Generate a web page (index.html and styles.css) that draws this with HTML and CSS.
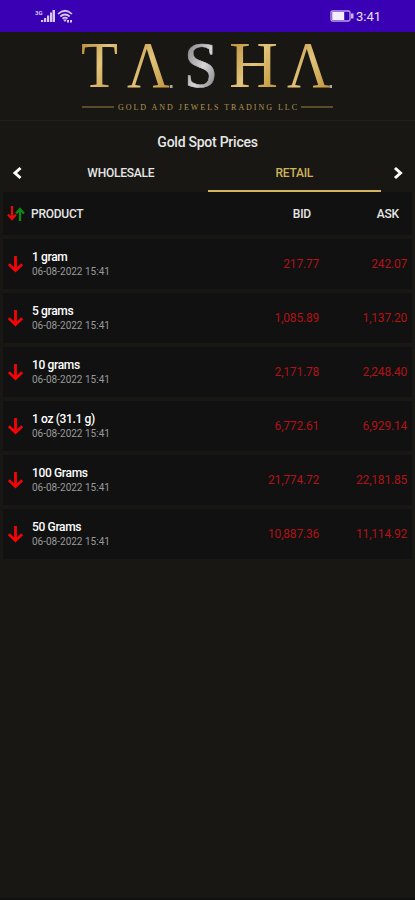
FILE: index.html
```html
<!DOCTYPE html>
<html lang="en">
<head>
    <meta charset="utf-8" />
    <title>Gold Spot Prices</title>
    <link rel="stylesheet" href="styles.css">
</head>
<body>
    <svg class="defs" width="0" height="0">
        <symbol id="down" viewBox="0 0 16 18">
            <path d="M7.500 1v14.500M0.800 9.200L7.500 15.500l6.700-6.300" fill="none" stroke="#f30505" stroke-width="2.800" />
        </symbol>
    </svg>
    <div class="status_bar">
        <svg class="signal" width="40" height="16" viewBox="0 0 40 16">
            <text class="net" x="1" y="7">3G</text>
            <path d="M7 14v-2h2.200v2zM10 14v-4h2.200v4zM13 14V7.500h2.200V14zM16 14V4.500h2V14zM18.500 14V2H21v12z" fill="#d8c8f8" />
            <g fill="none" stroke="#d8c8f8" stroke-width="1.700">
                <path d="M24 6q7-6.500 14 0M26.300 8.500q4.700-4 9.400 0M28.500 10.700q2.500-2 5 0" />
            </g>
            <path d="M29 11.500h4l-2 2.500zM33 12h2v2.500h-2zM36 12h2v2.500h-2z" fill="#d8c8f8" />
        </svg>
        <div class="right">
            <svg width="24" height="12" viewBox="0 0 24 12">
                <rect x="1" y="1" width="19" height="10" rx="1.500" fill="none" stroke="#b9a0ee" stroke-width="1.300" />
                <rect x="2.200" y="2" width="12" height="8" fill="#f3edff" />
                <path d="M21 3.500h2.500v5H21z" fill="#c9b6f3" />
            </svg>
            <span class="time">3:41</span>
        </div>
    </div>
    <div class="header">
        <svg width="254" height="80" viewBox="0 0 254 80">
            <defs>
                <linearGradient id="gold" x1="0" y1="0" x2="1" y2="1">
                    <stop offset="0.100" stop-color="#ba8e38" />
                    <stop offset="0.500" stop-color="#e3c47b" />
                    <stop offset="0.850" stop-color="#c49a41" />
                </linearGradient>
                <linearGradient id="silver" x1="0" y1="0" x2="1" y2="1">
                    <stop offset="0.200" stop-color="#8d8d91" />
                    <stop offset="0.550" stop-color="#d6d6d8" />
                    <stop offset="0.850" stop-color="#88888c" />
                </linearGradient>
            </defs>
            <g class="logo">
                <text x="0" y="54.500" textLength="37" lengthAdjust="spacingAndGlyphs">T</text>
                <text x="46" y="54.500" textLength="43" lengthAdjust="spacingAndGlyphs">Λ</text>
                <text class="silver" x="103" y="54.500" textLength="34" lengthAdjust="spacingAndGlyphs">S</text>
                <text x="148" y="54.500" textLength="49" lengthAdjust="spacingAndGlyphs">H</text>
                <text x="206" y="54.500" textLength="43" lengthAdjust="spacingAndGlyphs">Λ</text>
            </g>
            <path d="M89 53h2.500v3H89zM248.500 53h2.500v3h-2.500z" fill="#a9a7a2" />
            <path d="M1 75h32M220 75h32" stroke="#9c8140" />
            <text class="tagline" x="37" y="78" textLength="179">GOLD AND JEWELS TRADING LLC</text>
        </svg>
    </div>
    <div class="title">Gold Spot Prices</div>
    <div class="tabs">
        <svg class="arrow" width="10" height="14" viewBox="0 0 10 14">
            <path d="M8.500 2L3 7l5.500 5" fill="none" stroke="#fff" stroke-width="3" />
        </svg>
        <div class="tab">WHOLESALE</div>
        <div class="tab active">RETAIL</div>
        <svg class="arrow" width="10" height="14" viewBox="0 0 10 14">
            <path d="M2 2l5.500 5L2 12" fill="none" stroke="#fff" stroke-width="3" />
        </svg>
    </div>
    <div class="row head">
        <svg class="updown" width="18" height="16" viewBox="0 0 18 16">
            <path d="M4 0v13M0 8.500l4 4.500 4-4.500" fill="none" stroke="#e80909" stroke-width="2.200" />
            <path d="M12 15V3M8 7.500L12 3l4 4.500" fill="none" stroke="#0b8a14" stroke-width="2.200" />
        </svg>
        <div class="product">PRODUCT</div>
        <div class="bid">BID</div>
        <div class="ask">ASK</div>
    </div>
    <div class="row">
        <svg class="down" width="16" height="18"><use href="#down" /></svg>
        <div class="product"><div class="name">1 gram</div><div class="date">06-08-2022 15:41</div></div>
        <div class="bid">217.77</div>
        <div class="ask">242.07</div>
    </div>
    <div class="row">
        <svg class="down" width="16" height="18"><use href="#down" /></svg>
        <div class="product"><div class="name">5 grams</div><div class="date">06-08-2022 15:41</div></div>
        <div class="bid">1,085.89</div>
        <div class="ask">1,137.20</div>
    </div>
    <div class="row">
        <svg class="down" width="16" height="18"><use href="#down" /></svg>
        <div class="product"><div class="name">10 grams</div><div class="date">06-08-2022 15:41</div></div>
        <div class="bid">2,171.78</div>
        <div class="ask">2,248.40</div>
    </div>
    <div class="row">
        <svg class="down" width="16" height="18"><use href="#down" /></svg>
        <div class="product"><div class="name">1 oz (31.1 g)</div><div class="date">06-08-2022 15:41</div></div>
        <div class="bid">6,772.61</div>
        <div class="ask">6,929.14</div>
    </div>
    <div class="row">
        <svg class="down" width="16" height="18"><use href="#down" /></svg>
        <div class="product"><div class="name">100 Grams</div><div class="date">06-08-2022 15:41</div></div>
        <div class="bid">21,774.72</div>
        <div class="ask">22,181.85</div>
    </div>
    <div class="row">
        <svg class="down" width="16" height="18"><use href="#down" /></svg>
        <div class="product"><div class="name">50 Grams</div><div class="date">06-08-2022 15:41</div></div>
        <div class="bid">10,887.36</div>
        <div class="ask">11,114.92</div>
    </div>
</body>
</html>
```
FILE: styles.css
```css
html, body {
    margin: 0;
    padding: 0;
    height: 100%;
    font-family: Roboto, sans-serif;
    background-color: #181714;
    color: #e6e6e6;
}

body {
    box-sizing: border-box;
    border-bottom: 2px solid #111;
}

svg {
    display: block;
    overflow: visible;
}

.defs {
    display: none;
}

.status_bar {
    display: flex;
    justify-content: space-between;
    align-items: center;
    height: 32px;
    padding: 0 34px;
    background-color: #3a00b3;
}

.signal .net {
    font-size: 6px;
    font-weight: bold;
    fill: #d8c8f8;
}

.status_bar .right {
    display: flex;
    align-items: center;
    gap: 2px;
}

.status_bar .time {
    font-size: 13px;
    color: #e9e0fc;
}

.header {
    display: flex;
    justify-content: center;
    height: 88px;
    border-bottom: 1px solid #211f1b;
}

.logo text {
    font-family: "Liberation Serif", serif;
    font-size: 66px;
    fill: url(#gold);
}

.logo .silver {
    fill: url(#silver);
    stroke: url(#silver);
    stroke-width: 0.6px;
}

.tagline {
    font-family: "Liberation Serif", serif;
    font-size: 8px;
    fill: #b3954f;
}

.title {
    height: 32px;
    padding-top: 4px;
    line-height: 34px;
    box-sizing: border-box;
    text-align: center;
    font-size: 14px;
    letter-spacing: -0.25px;
    font-weight: 500;
}

.tabs {
    display: flex;
    align-items: center;
    height: 39px;
    padding: 0 12px;
}

.arrow {
    margin-right: 12px;
}

    .tab + .arrow {
        margin: 0 0 0 12px;
    }

.tab {
    flex: 1;
    box-sizing: border-box;
    height: 39px;
    line-height: 40px;
    text-align: center;
    font-size: 12px;
    letter-spacing: -0.25px;
    font-weight: 500;
}

    .tab.active {
        color: #cfb35c;
        border-bottom: 2px solid #d2b65f;
    }

.row {
    display: flex;
    align-items: center;
    height: 50px;
    margin: 0 3px 4px;
    padding: 0 5px;
    background-color: #111;
}

.head {
    height: 43px;
    font-size: 12px;
    letter-spacing: -0.25px;
    font-weight: 500;
}

.product {
    flex: 1;
}

.down + .product {
    margin-left: 8px;
}

.updown + .product {
    margin-left: 5px;
}

.name {
    font-size: 12px;
    letter-spacing: -0.35px;
    line-height: 15px;
    font-weight: 500;
    color: #fff;
}

.date {
    font-size: 10px;
    line-height: 14px;
    color: #999;
}

.bid, .ask {
    width: 88px;
    text-align: right;
    font-size: 12px;
    letter-spacing: -0.2px;
    line-height: 16px;
    color: #b01217;
}

.head .bid, .head .ask {
    padding-right: 8px;
    box-sizing: border-box;
    color: #e6e6e6;
}
```
